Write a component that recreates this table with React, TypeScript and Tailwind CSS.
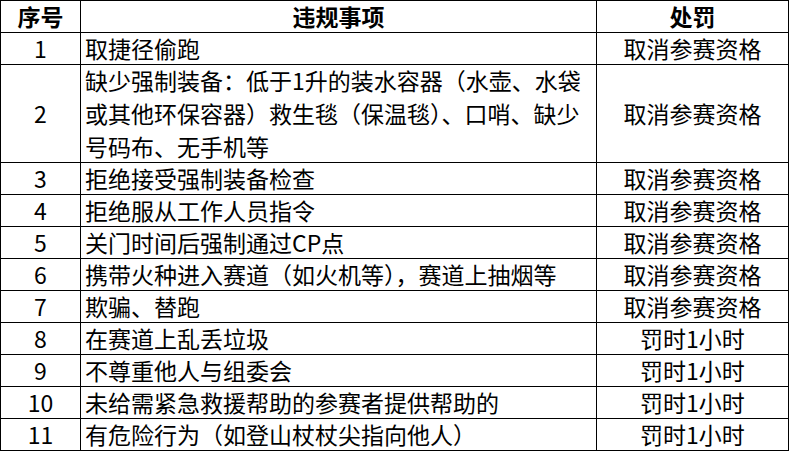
import React from 'react';

type Row = { no: string; item: React.ReactNode; penalty: string; tall?: boolean };

const DQ = '取消参赛资格';
const HOUR = '罚时1小时';

const rows: Row[] = [
  { no: '1', item: '取捷径偷跑', penalty: DQ },
  {
    no: '2',
    item: (
      <>
        缺少强制装备：低于1升的装水容器（水壶、水袋
        <br />
        或其他环保容器）救生毯（保温毯）、口哨、缺少
        <br />
        号码布、无手机等
      </>
    ),
    penalty: DQ,
    tall: true,
  },
  { no: '3', item: '拒绝接受强制装备检查', penalty: DQ },
  { no: '4', item: '拒绝服从工作人员指令', penalty: DQ },
  { no: '5', item: '关门时间后强制通过CP点', penalty: DQ },
  { no: '6', item: '携带火种进入赛道（如火机等），赛道上抽烟等', penalty: DQ },
  { no: '7', item: '欺骗、替跑', penalty: DQ },
  { no: '8', item: '在赛道上乱丢垃圾', penalty: HOUR },
  { no: '9', item: '不尊重他人与组委会', penalty: HOUR },
  { no: '10', item: '未给需紧急救援帮助的参赛者提供帮助的', penalty: HOUR },
  { no: '11', item: '有危险行为（如登山杖杖尖指向他人）', penalty: HOUR },
];

export default function App() {
  return (
    <div className="w-[789px] h-[451px] overflow-hidden bg-white text-black font-['Noto_Sans_CJK_SC',sans-serif] text-[23px]">
      <table className="w-[789px] table-fixed border-collapse border border-black">
        <colgroup>
          <col className="w-[80px]" />
          <col className="w-[516px]" />
          <col />
        </colgroup>
        <thead>
          <tr>
            <th className="border border-black p-0 font-bold">
              <div className="h-[31px] flex items-center justify-center leading-none">序号</div>
            </th>
            <th className="border border-black p-0 font-bold">
              <div className="h-[31px] flex items-center justify-center leading-none">违规事项</div>
            </th>
            <th className="border border-black p-0 font-bold">
              <div className="h-[31px] flex items-center justify-center leading-none">处罚</div>
            </th>
          </tr>
        </thead>
        <tbody>
          {rows.map((r) => (
            <tr key={r.no}>
              <td className="border border-black p-0">
                <div
                  className={`flex items-center justify-center leading-none ${
                    r.tall ? 'h-[97px]' : 'h-[31px]'
                  }`}
                >
                  {r.no}
                </div>
              </td>
              <td className="border border-black p-0">
                <div
                  className={`flex items-center pl-[4px] whitespace-nowrap ${
                    r.tall ? 'h-[97px] leading-[33px]' : 'h-[31px] leading-none'
                  }`}
                >
                  <div>{r.item}</div>
                </div>
              </td>
              <td className="border border-black p-0">
                <div
                  className={`flex items-center justify-center leading-none ${
                    r.tall ? 'h-[97px]' : 'h-[31px]'
                  }`}
                >
                  {r.penalty}
                </div>
              </td>
            </tr>
          ))}
        </tbody>
      </table>
    </div>
  );
}
